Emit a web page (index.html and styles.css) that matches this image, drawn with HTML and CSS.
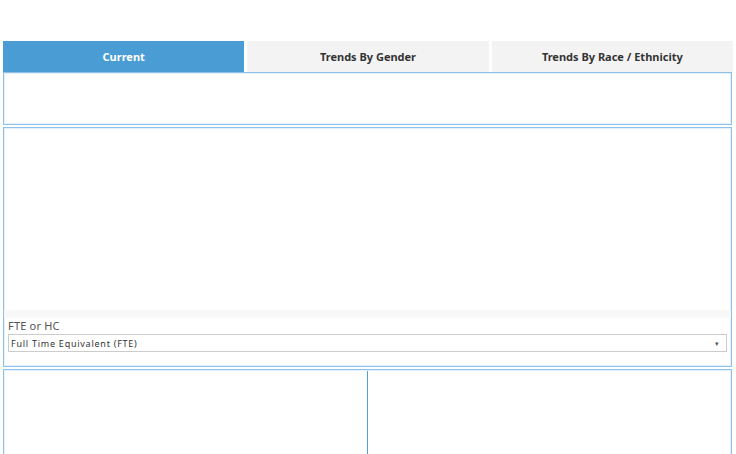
FILE: index.html
```html
<!DOCTYPE html>
<html lang="en">
<head>
    <meta charset="UTF-8">
    <meta name="viewport" content="width=device-width, initial-scale=1.0">
    <title>Dashboard</title>
    <link rel="stylesheet" href="styles.css">
</head>
<body>
    <div class="page">
        <div class="tabs">
            <div class="tab active">Current</div>
            <div class="tab">Trends By Gender</div>
            <div class="tab">Trends By Race / Ethnicity</div>
        </div>

        <div class="box box-top"></div>

        <div class="box box-main">
            <div class="chart"></div>
            <div class="band"></div>
            <div class="filter">
                <div class="filter-label">FTE or HC</div>
                <div class="select">
                    <span>Full Time Equivalent (FTE)</span>
                    <span class="arrow">&#9662;</span>
                </div>
            </div>
        </div>

        <div class="box box-bottom">
            <div class="col"></div>
            <div class="col col-right"></div>
        </div>
    </div>
</body>
</html>
```

FILE: styles.css
```css
body {
    margin: 0;
    background-color: #fff;
    font-family: 'Noto Sans', sans-serif;
}

.page {
    height: 454px;
    box-sizing: border-box;
    overflow: hidden;
    padding: 41px 3px 0 3px;
}

.tabs {
    display: flex;
    gap: 3px;
    height: 31px;
}

.tab {
    flex: 1;
    display: flex;
    align-items: center;
    justify-content: center;
    background-color: #f3f3f3;
    color: #333;
    font-size: 11px;
    font-weight: bold;
}

.tab.active {
    background-color: #4a9cd4;
    color: #fff;
}

.box {
    border: 1px solid #8ec0e8;
    box-shadow: inset 0 0 0 1px #e4f0fa;
    margin-right: 1px;
}

.box-top {
    height: 51px;
}

.box-main {
    margin-top: 2px;
    height: 238px;
    display: flex;
    flex-direction: column;
}

.chart {
    height: 182px;
}

.band {
    height: 8px;
    background-color: #f8f8f8;
}

.filter {
    padding: 1px 4px 0 4px;
}

.filter-label {
    font-size: 11px;
    letter-spacing: 0.2px;
    color: #555;
    line-height: 14px;
}

.select {
    margin-top: 1px;
    height: 16px;
    border: 1px solid #ccc;
    display: flex;
    align-items: center;
    justify-content: space-between;
    padding: 0 6px 0 2px;
    font-size: 9px;
    letter-spacing: 0.75px;
    color: #333;
}

.arrow {
    font-size: 7px;
    color: #555;
}

.box-bottom {
    margin-top: 2px;
    height: 100px;
    display: flex;
}

.col {
    flex: 1;
}

.col-right {
    border-left: 1px solid #4aa3dc;
    margin-top: 1px;
}
```
